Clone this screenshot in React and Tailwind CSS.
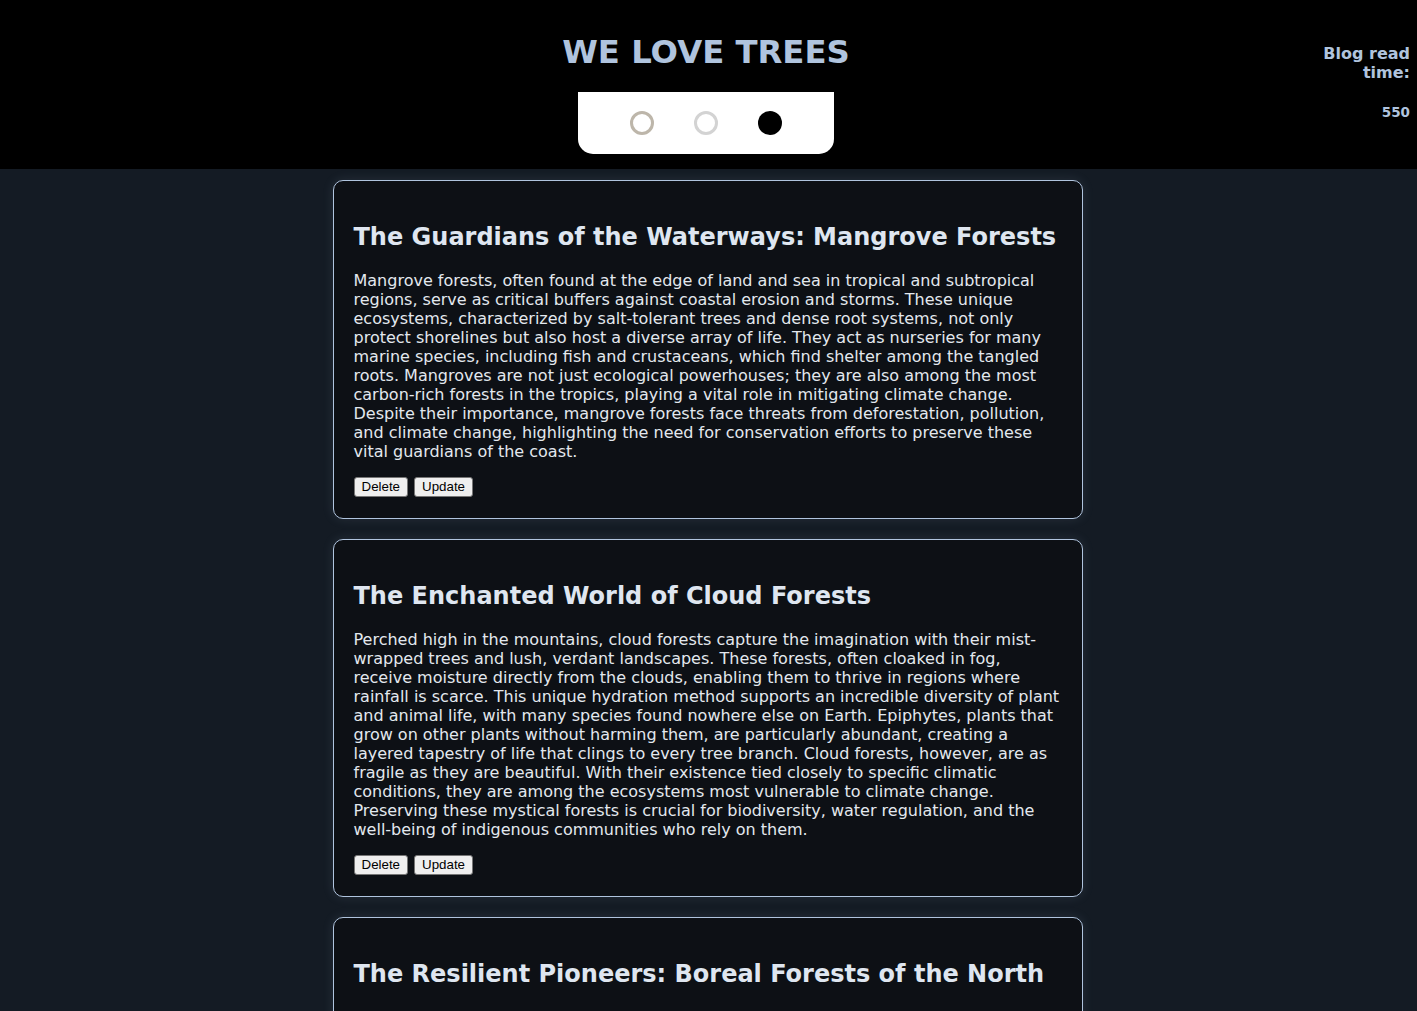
const posts = [
  {
    id: 1,
    title: 'The Guardians of the Waterways: Mangrove Forests',
    body: 'Mangrove forests, often found at the edge of land and sea in tropical and subtropical regions, serve as critical buffers against coastal erosion and storms. These unique ecosystems, characterized by salt-tolerant trees and dense root systems, not only protect shorelines but also host a diverse array of life. They act as nurseries for many marine species, including fish and crustaceans, which find shelter among the tangled roots. Mangroves are not just ecological powerhouses; they are also among the most carbon-rich forests in the tropics, playing a vital role in mitigating climate change. Despite their importance, mangrove forests face threats from deforestation, pollution, and climate change, highlighting the need for conservation efforts to preserve these vital guardians of the coast.',
  },
  {
    id: 2,
    title: 'The Enchanted World of Cloud Forests',
    body: 'Perched high in the mountains, cloud forests capture the imagination with their mist-wrapped trees and lush, verdant landscapes. These forests, often cloaked in fog, receive moisture directly from the clouds, enabling them to thrive in regions where rainfall is scarce. This unique hydration method supports an incredible diversity of plant and animal life, with many species found nowhere else on Earth. Epiphytes, plants that grow on other plants without harming them, are particularly abundant, creating a layered tapestry of life that clings to every tree branch. Cloud forests, however, are as fragile as they are beautiful. With their existence tied closely to specific climatic conditions, they are among the ecosystems most vulnerable to climate change. Preserving these mystical forests is crucial for biodiversity, water regulation, and the well-being of indigenous communities who rely on them.',
  },
  {
    id: 3,
    title: 'The Resilient Pioneers: Boreal Forests of the North',
    body: 'Spanning vast stretches across the northern hemisphere, the boreal forest, or taiga, is one of the largest land biomes on the planet. Dominated by conifers such as spruce, pine and fir, these forests endure long, harsh winters and short summers, storing enormous amounts of carbon in their soils and peatlands.',
  },
];

function Dot({ tone }) {
  if (tone === 'filled') return <span className="h-6 w-6 rounded-full bg-black" />;
  if (tone === 'tan') return <span className="h-6 w-6 rounded-full border-[3px] border-[#bdb6aa]" />;
  return <span className="h-6 w-6 rounded-full border-[3px] border-[#d3d3d3]" />;
}

function PostCard({ post }) {
  return (
    <div className="w-[750px] rounded-[10px] border border-[#b0c4de] bg-[#0d1015] px-5 pb-[21px] pt-5 shadow-[0_0_12px_rgba(176,196,222,0.12)]">
      <h2 className="mt-[22px] text-[24px] font-bold leading-[28px] text-[#dfe6f0]">{post.title}</h2>
      <p className="mt-[20px] text-[16px] leading-[19px] text-[#e3e8ee]">{post.body}</p>
      <div className="mt-[16px] flex gap-[6px] font-['Liberation_Sans',Arial,sans-serif] text-[13.33px] text-black">
        <button className="h-[20px] rounded-[3px] border border-[#767676] bg-[#efefef] px-[7px] leading-[18px]">Delete</button>
        <button className="h-[20px] rounded-[3px] border border-[#767676] bg-[#efefef] px-[7px] leading-[18px]">Update</button>
      </div>
    </div>
  );
}

export default function App() {
  return (
    <div className="min-h-screen bg-[#141b24] font-['DejaVu_Sans',Verdana,sans-serif]">
      <header className="relative flex h-[169px] flex-col items-center bg-black pr-[5px]">
        <h1 className="mt-[34px] text-[32.3px] font-bold leading-[37px] text-[#b0c4de]">WE LOVE TREES</h1>
        <div className="mt-[21px] flex h-[62px] w-[256px] items-center justify-center gap-10 rounded-b-[15px] bg-white">
          <Dot tone="tan" />
          <Dot tone="gray" />
          <Dot tone="filled" />
        </div>
        <div className="absolute right-[7px] top-[44px] w-[100px] text-right font-bold text-[#b0c4de]">
          <div className="text-[16px] leading-[19px]">Blog read time:</div>
          <div className="mt-[22px] text-[13.5px] leading-[16px]">550</div>
        </div>
      </header>
      <main className="flex flex-col items-center gap-[20px] pr-[2px] pt-[11px]">
        {posts.map((post) => (
          <PostCard key={post.id} post={post} />
        ))}
      </main>
    </div>
  );
}
